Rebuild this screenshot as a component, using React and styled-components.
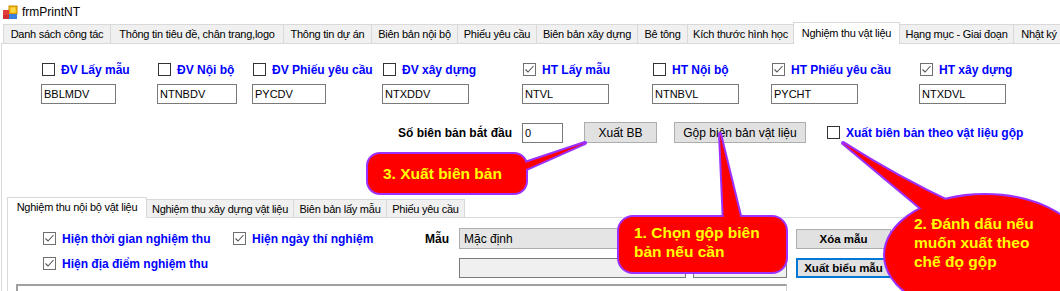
import React from 'react'
import styled, { createGlobalStyle } from 'styled-components'

const GlobalStyle = createGlobalStyle`
  html, body {
    margin: 0;
    padding: 0;
    background: #fff;
  }
  body {
    font-family: "Liberation Sans", Arial, sans-serif;
    color: #000;
  }
`

const Window = styled.div`
  position: relative;
  width: 1060px;
  height: 291px;
  overflow: hidden;
  background: #fff;
`

const TitleBar = styled.div`
  height: 22px;
  box-sizing: border-box;
  padding: 2px 0 0 2px;
  display: flex;
  align-items: center;
  gap: 4px;
  font-size: 12px;
`

const TabStrip = styled.div`
  display: flex;
  align-items: flex-end;
  height: ${p => p.$h}px;
`

const Tab = styled.div`
  flex: none;
  box-sizing: border-box;
  position: relative;
  z-index: ${p => (p.$active ? 2 : 1)};
  width: ${p => p.$w}px;
  height: ${p => p.$h}px;
  margin-right: -1px;
  margin-bottom: ${p => (p.$active ? -1 : 0)}px;
  padding-bottom: ${p => (p.$active ? 2 : 0)}px;
  border: 1px solid #d9d9d9;
  border-bottom: 0;
  background: ${p => (p.$active ? '#fff' : '#f0f0f0')};
  display: flex;
  align-items: center;
  justify-content: center;
  font-size: 11px;
  letter-spacing: -0.25px;
  white-space: nowrap;
  overflow: hidden;
`

const Panel = styled.div`
  margin-left: 1px;
  height: 260px;
  border-top: 1px solid #d9d9d9;
  border-left: 1px solid #d9d9d9;
  padding-top: 18px;
`

const FieldGrid = styled.div`
  display: grid;
  grid-template-columns: 116px 95px 130px 140px 130px 119px 148px 100px;
  padding-left: 39px;
`

const Field = styled.div`
  display: flex;
  flex-direction: column;
  gap: 7px;
`

const CheckLabel = styled.div`
  display: flex;
  align-items: center;
  gap: 6px;
  height: 15px;
  margin-left: 1px;
  margin-top: ${p => p.$mt || 0}px;
  align-self: ${p => p.$align || 'auto'};
  font-size: 12px;
  font-weight: bold;
  color: #0000ff;
  white-space: nowrap;
`

const Box = styled.span`
  flex: none;
  box-sizing: border-box;
  width: 13px;
  height: 13px;
  border: 1px solid ${p => (p.$checked ? '#6f6f6f' : '#333')};
  background: #fff;
  display: flex;
  align-items: center;
  justify-content: center;
`

const TextBox = styled.div`
  box-sizing: border-box;
  width: ${p => (p.$w ? `${p.$w}px` : 'auto')};
  height: 20px;
  margin-left: ${p => p.$ml || 0}px;
  grid-column: ${p => p.$col || 'auto'};
  border: 1px solid #7a7a7a;
  background: ${p => p.$bg || '#fff'};
  padding-left: 2px;
  display: flex;
  align-items: center;
  font-size: 11px;
`

const ActionRow = styled.div`
  display: flex;
  align-items: center;
  height: 21px;
  margin-top: 18px;
  padding-left: 392px;
`

const BoldLabel = styled.div`
  width: ${p => (p.$w ? `${p.$w}px` : 'auto')};
  text-align: ${p => p.$align || 'left'};
  font-size: 12px;
  font-weight: bold;
  white-space: nowrap;
`

const Button = styled.div`
  flex: none;
  box-sizing: border-box;
  width: ${p => (p.$w ? `${p.$w}px` : 'auto')};
  height: ${p => p.$h || 21}px;
  margin-left: ${p => p.$ml || 0}px;
  grid-column: ${p => p.$col || 'auto'};
  border: ${p => (p.$focused ? '2px solid #0078d7' : '1px solid #adadad')};
  background: #e1e1e1;
  display: flex;
  align-items: center;
  justify-content: center;
  font-size: ${p => (p.$bold ? 11.5 : 12)}px;
  font-weight: ${p => (p.$bold ? 'bold' : 'normal')};
  white-space: nowrap;
`

const InnerTabs = styled.div`
  margin: 54px 0 0 5px;
`

const InnerPanel = styled.div`
  border-top: 1px solid #d9d9d9;
  border-left: 1px solid #d9d9d9;
  padding: 10px 0 0 0;
  height: 80px;
`

const InnerGrid = styled.div`
  display: grid;
  grid-template-columns: 190px 193px 34px 227px 7px 94px 9px 95px;
  grid-template-rows: 21px 20px;
  row-gap: 9px;
  align-items: center;
  padding-left: 34px;
`

const Combo = styled.div`
  grid-column: 4 / 7;
  box-sizing: border-box;
  height: 21px;
  border: 1px solid #adadad;
  background: #e5e5e5;
  padding-left: 4px;
  display: flex;
  align-items: center;
  font-size: 12px;
`

const GroupBox = styled.div`
  margin: 6px 0 0 8px;
  width: 771px;
  height: 20px;
  box-sizing: border-box;
  border-top: 2px solid #a0a0a0;
  border-left: 2px solid #a0a0a0;
  border-right: 1px solid #d0d0d0;
`

const Overlay = styled.svg`
  position: absolute;
  left: 0;
  top: 0;
  pointer-events: none;
`

const CalloutText = styled.div`
  position: absolute;
  left: ${p => p.$x}px;
  top: ${p => p.$y}px;
  color: #ffff00;
  font-size: 15.5px;
  line-height: 19px;
  font-weight: bold;
  white-space: pre;
`

const AppIcon = () => (
  <svg width="16" height="16" viewBox="0 0 16 16">
    <rect x="7" y="2" width="8" height="8" fill="#f5b400" stroke="#c98a00" />
    <rect x="8.5" y="3.5" width="5" height="5" fill="#ffd84a" />
    <rect x="1" y="6" width="6" height="5" fill="#e23b3b" />
    <rect x="1" y="11" width="6" height="4" fill="#d12f2f" />
    <rect x="7" y="10" width="8" height="5" fill="#3b7fe0" />
  </svg>
)

const Check = ({ checked, label, ...rest }) => (
  <CheckLabel {...rest}>
    <Box $checked={checked}>
      {checked && (
        <svg width="11" height="11" viewBox="0 0 11 11">
          <polyline points="1.5,5.5 4,8 9.5,2" fill="none" stroke="#555" strokeWidth="1.1" />
        </svg>
      )}
    </Box>
    {label}
  </CheckLabel>
)

const tabs = [
  ['Danh sách công tác', 108],
  ['Thông tin tiêu đề, chân trang,logo', 174],
  ['Thông tin dự án', 89],
  ['Biên bản nội bộ', 87],
  ['Phiếu yêu cầu', 80],
  ['Biên bản xây dựng', 102],
  ['Bê tông', 51],
  ['Kích thước hình học', 107],
  ['Nghiệm thu vật liệu', 107, true],
  ['Hạng mục - Giai đoạn', 115],
  ['Nhật ký', 52],
]

const innerTabs = [
  ['Nghiệm thu nội bộ vật liệu', 140, true],
  ['Nghiệm thu xây dựng vật liệu', 148],
  ['Biên bản lấy mẫu', 94],
  ['Phiếu yêu cầu', 79],
]

const fields = [
  { label: 'ĐV Lấy mẫu', checked: false, value: 'BBLMDV', w: 75 },
  { label: 'ĐV Nội bộ', checked: false, value: 'NTNBDV', w: 80 },
  { label: 'ĐV Phiếu yêu cầu', checked: false, value: 'PYCDV', w: 74 },
  { label: 'ĐV xây dựng', checked: false, value: 'NTXDDV', w: 87 },
  { label: 'HT Lấy mẫu', checked: true, value: 'NTVL', w: 87 },
  { label: 'HT Nội bộ', checked: false, value: 'NTNBVL', w: 87 },
  { label: 'HT Phiếu yêu cầu', checked: true, value: 'PYCHT', w: 87 },
  { label: 'HT xây dựng', checked: true, value: 'NTXDVL', w: 87 },
]

// callout bubbles drawn twice: purple outline layer, then red fill on top
const Bubbles = ({ paint }) => (
  <g {...paint}>
    <rect x="368" y="154" width="158" height="39" rx="12" />
    <polygon points="522,164 585,143 522,171" />
    <rect x="619" y="217" width="167" height="55" rx="14" />
    <polygon points="720,134 724,224 742,224" />
    <ellipse cx="985" cy="255" rx="100" ry="60" />
    <path d="M843,143 Q898,178 954,204 L928,214 Q884,177 843,143 Z" />
  </g>
)

const App = () => {
  return (
    <Window>
      <GlobalStyle />
      <TitleBar>
        <AppIcon />
        <span>frmPrintNT</span>
      </TitleBar>

      <TabStrip $h={21} style={{ paddingLeft: 3 }}>
        {tabs.map(([name, w, active]) => (
          <Tab key={name} $w={w} $h={active ? 22 : 19} $active={active}>
            {name}
          </Tab>
        ))}
      </TabStrip>

      <Panel>
        <FieldGrid>
          {fields.map(f => (
            <Field key={f.label}>
              <Check checked={f.checked} label={f.label} />
              <TextBox $w={f.w}>{f.value}</TextBox>
            </Field>
          ))}
        </FieldGrid>

        <ActionRow>
          <BoldLabel $w={118} $align="right">Số biên bản bắt đầu</BoldLabel>
          <TextBox $w={41} $ml={10}>0</TextBox>
          <Button $w={73} $ml={21}>Xuất BB</Button>
          <Button $w={132} $ml={17}>Gộp biên bản vật liệu</Button>
          <Check checked={false} label="Xuất biên bản theo vật liệu gộp" style={{ marginLeft: 21 }} />
        </ActionRow>

        <InnerTabs>
          <TabStrip $h={20}>
            {innerTabs.map(([name, w, active]) => (
              <Tab key={name} $w={w} $h={active ? 21 : 18} $active={active}>
                {name}
              </Tab>
            ))}
          </TabStrip>
          <InnerPanel>
            <InnerGrid>
              <Check checked label="Hiện thời gian nghiệm thu" />
              <Check checked label="Hiện ngày thí nghiệm" />
              <BoldLabel>Mẫu</BoldLabel>
              <Combo>Mặc định</Combo>
              <Button $col="8" $h={20} $bold>Xóa mẫu</Button>

              <Check checked label="Hiện địa điểm nghiệm thu" $align="start" $mt={-2} />
              <TextBox $col="4" $bg="#f0f0f0" />
              <TextBox $col="6" $bg="#f0f0f0" />
              <Button $col="8" $h={20} $bold $focused>Xuất biểu mẫu</Button>
            </InnerGrid>
            <GroupBox />
          </InnerPanel>
        </InnerTabs>
      </Panel>

      <Overlay width="1060" height="291" viewBox="0 0 1060 291">
        <Bubbles paint={{ fill: '#9b30ff', stroke: '#9b30ff', strokeWidth: 4, strokeLinejoin: 'round' }} />
        <Bubbles paint={{ fill: '#ff0000' }} />
      </Overlay>
      <CalloutText $x={383} $y={164}>3. Xuất biên bản</CalloutText>
      <CalloutText $x={634} $y={223}>{'1. Chọn gộp biên\nbản nếu cần'}</CalloutText>
      <CalloutText $x={914} $y={214}>{'2. Đánh dấu nếu\nmuốn xuất theo\nchế đọ gộp'}</CalloutText>
    </Window>
  )
}

export default App
